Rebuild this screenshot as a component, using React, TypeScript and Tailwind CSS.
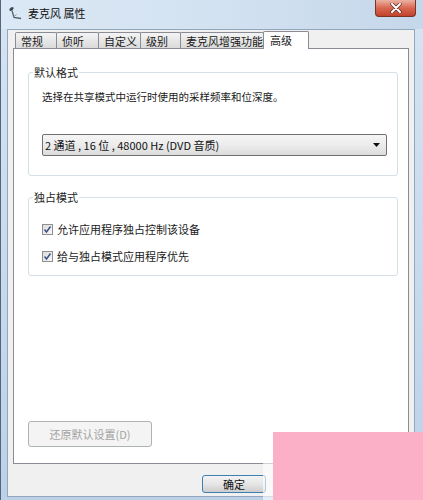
import React from "react";

const tabs = [
  { label: "常规", w: "w-[42px]" },
  { label: "侦听", w: "w-[43px]" },
  { label: "自定义", w: "w-[43px]" },
  { label: "级别", w: "w-[41px]" },
  { label: "麦克风增强功能", w: "w-[84px]" },
];

const MicIcon = () => (
  <svg width="16" height="16" viewBox="0 0 16 16" className="shrink-0">
    <ellipse cx="4.5" cy="4" rx="2.4" ry="1.5" transform="rotate(-35 4.5 4)" fill="#3f4a55" />
    <path d="M5 5.5 L7 12.5 L14 13.5" stroke="#55616e" strokeWidth="1.3" fill="none" />
    <path d="M6.5 12 L9.5 9.5" stroke="#8a949e" strokeWidth="1" fill="none" />
  </svg>
);

const CheckBox = () => (
  <span className="w-[11px] h-[11px] border border-[#8e8f8f] bg-gradient-to-br from-[#dcdcdc] to-[#f9f9f9] flex items-center justify-center shrink-0">
    <svg width="9" height="9" viewBox="0 0 9 9">
      <path d="M1.5 4.5 L3.5 7 L7.5 1.5" stroke="#3b5286" strokeWidth="1.5" fill="none" />
    </svg>
  </span>
);

const GroupBox = ({ title, className, children }: { title: string; className: string; children: React.ReactNode }) => (
  <div className={`relative w-[370px] border border-[#d5dfe5] rounded-[3px] ${className}`}>
    <span className="absolute -top-[8px] left-[4px] bg-white px-[1px] leading-[15px] text-[11px] text-[#1e1e1e]">
      {title}
    </span>
    {children}
  </div>
);

export default function App() {
  return (
    <div className="relative w-[423px] h-[500px] overflow-hidden flex flex-col border-l border-[#56667a] bg-gradient-to-b from-[#d6e4f3] to-[#bcd1e8] font-[family-name:Noto_Sans_CJK_SC,sans-serif] text-black">
      {/* title bar */}
      <div className="h-[29px] shrink-0 flex items-start justify-between bg-gradient-to-r from-[#dbe8f5] via-[#d3e2f1] to-[#c5d7ea]">
        <div className="flex items-center h-[26px] pl-[6px] gap-[5px]">
          <MicIcon />
          <span className="text-[11px] leading-[15px] text-[#111]">麦克风 属性</span>
        </div>
        <div className="mr-[7px] w-[41px] h-[17px] rounded-b-[4px] border border-t-0 border-[#7b3326] bg-gradient-to-b from-[#eab2a4] via-[#d86750] to-[#c0432c] flex items-center justify-center">
          <svg width="12" height="10" viewBox="0 0 12 10">
            <path d="M2 1 L10 9 M10 1 L2 9" stroke="#5a2a22" strokeWidth="3.4" strokeLinecap="round" />
            <path d="M2 1 L10 9 M10 1 L2 9" stroke="#ffffff" strokeWidth="2" strokeLinecap="round" />
          </svg>
        </div>
      </div>

      {/* client area */}
      <div className="ml-[6px] mr-[8px] mb-[3px] flex-1 flex flex-col bg-[#f0f0f0] border border-[#92a6bc] px-[5px]">
        <div className="h-[18px] flex items-end pl-[2px]">
          {tabs.map((t) => (
            <div
              key={t.label}
              className={`${t.w} h-[16px] -ml-px first:ml-0 border border-b-0 border-[#898c95] rounded-t-[2px] bg-gradient-to-b from-[#f4f4f4] to-[#dadada] flex items-center pl-[5px] text-[11px] leading-[14px] text-[#1a1a1a]`}
            >
              {t.label}
            </div>
          ))}
          <div className="relative z-10 w-[46px] h-[18px] -mb-px -ml-px border border-b-0 border-[#898c95] rounded-t-[2px] bg-white flex items-start pl-[6px] pt-[1px] text-[11px] leading-[14px] text-[#1a1a1a]">
            高级
          </div>
        </div>

        <div className="h-[416px] shrink-0 border border-[#898c95] bg-white flex flex-col pl-[14px]">
          <GroupBox title="默认格式" className="mt-[23px] h-[104px] pl-[13px] pt-[16px]">
            <div className="text-[10.5px] leading-[16px] text-[#1a1a1a]">选择在共享模式中运行时使用的采样频率和位深度。</div>
            <div className="mt-[29px] w-[345px] h-[22px] border border-[#707070] rounded-[2px] bg-gradient-to-b from-[#f5f5f5] via-[#ececec] to-[#dcdcdc] flex items-center justify-between pl-[2px] pr-[6px]">
              <span className="text-[11px] leading-[14px] text-[#111]">2 通道 , 16 位 , 48000 Hz (DVD 音质)</span>
              <svg width="7" height="4" viewBox="0 0 7 4">
                <path d="M0 0 L7 0 L3.5 4 Z" fill="#111" />
              </svg>
            </div>
          </GroupBox>

          <GroupBox title="独占模式" className="mt-[21px] h-[79px] pl-[13px] pt-[23px]">
            <div className="flex items-center gap-[4px] h-[16px]">
              <CheckBox />
              <span className="text-[11px] leading-[16px] text-[#1a1a1a]">允许应用程序独占控制该设备</span>
            </div>
            <div className="mt-[11px] flex items-center gap-[4px] h-[16px]">
              <CheckBox />
              <span className="text-[11px] leading-[16px] text-[#1a1a1a]">给与独占模式应用程序优先</span>
            </div>
          </GroupBox>

          <button className="mt-[145px] w-[124px] h-[26px] border border-[#adb2b5] rounded-[3px] bg-[#f4f4f4] text-[11px] leading-[14px] text-[#a3a3a3]">
            还原默认设置(D)
          </button>
        </div>

        <div className="flex-1 pt-[6px]">
          <button className="ml-[189px] w-[64px] h-[18px] border border-[#3c7fb1] rounded-[3px] bg-gradient-to-b from-[#f3f3f3] via-[#e6e6e6] to-[#cdcdcd] text-[11px] leading-[14px] text-[#111]">
            确定
          </button>
        </div>
      </div>

      {/* pink watermark overlay */}
      <div className="absolute left-[262px] top-[455px] w-[10px] h-[45px] bg-white/60" />
      <div className="absolute left-[272px] top-[432px] w-[151px] h-[68px] bg-[#fbb0c7]" />
    </div>
  );
}
